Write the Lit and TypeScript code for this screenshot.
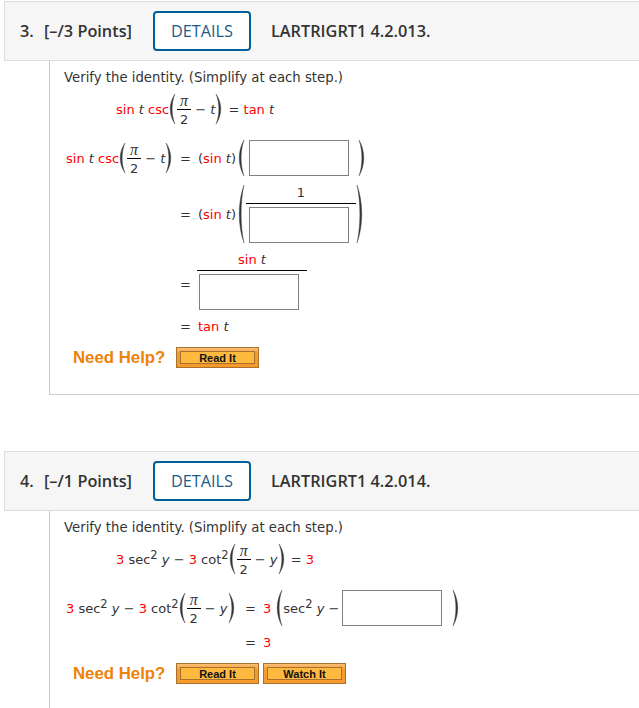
import { LitElement, html, css, svg } from "lit";
import { customElement } from "lit/decorators.js";

const paren = (h: number, right = false, w = 7) => {
  const a = right ? 1 : w - 1;
  const inner = right ? w - 2.2 : 2.2;
  const outer = right ? w + 0.4 : -0.4;
  return html`<svg class="paren" width=${w} height=${h} viewBox="0 0 ${w} ${h}">${svg`<path d="M${a} 0 C${outer} ${h * 0.3} ${outer} ${h * 0.7} ${a} ${h} C${inner} ${h * 0.7} ${inner} ${h * 0.3} ${a} 0Z" fill="#333" stroke="#444" stroke-width="0.4"/>`}</svg>`;
};

const piOver2 = html`<span class="frac"><span class="num"><i class="pi">π</i></span><span class="den">2</span></span>`;
const box = html`<span class="box"></span>`;
const r = (s: string) => html`<span class="red">${s}</span>`;
const t = (c: unknown) => html`<span class="run">${c}</span>`;
const trail = (c: unknown) => html`<span class="run trail">${c}</span>`;
const sinP = html`<span class="run pre">(${r("sin")} <i>t</i>)</span>`;

const needHelp = (watch: boolean) => html`
  <div class="help">
    <span class="need">Need Help?</span>
    <span class="btn"><span class="btn-in">Read It</span></span>
    ${watch ? html`<span class="btn watch"><span class="btn-in">Watch It</span></span>` : ""}
  </div>`;

const sinExpr = html`${t(html`${r("sin")} <i>t</i> ${r("csc")}`)}${paren(30)}${piOver2}${t(html` − <i>t</i>`)}${paren(30, true)}`;
const secExpr = html`${t(html`${r("3")} sec<sup>2</sup> <i>y</i> − ${r("3")} cot<sup>2</sup>`)}${paren(30)}${piOver2}${t(html` − <i>y</i>`)}${paren(30, true)}`;

@customElement("app-root")
export class AppRoot extends LitElement {
  static styles = css`
    :host { display: block; width: 639px; height: 708px; overflow: hidden; background: #fff; color: #333; font-family: "DejaVu Sans", Verdana, sans-serif; font-size: 13px; }
    .head { box-sizing: border-box; margin-left: 4px; width: 640px; height: 60px; margin-top: 1px; display: flex; align-items: center; background: #f6f6f6; border: 1px solid #ddd; font-family: "Open Sans", sans-serif; font-weight: 600; font-size: 16.3px; color: #333; }
    .head .n { margin-left: 15px; width: 24px; }
    .head .pts { width: 109px; }
    .details { box-sizing: border-box; width: 98px; height: 40px; display: flex; align-items: center; justify-content: center; border: 2px solid #00619a; border-radius: 4px; background: #fff; color: #1c5a8a; font-weight: 400; }
    .head .code { margin-left: 20px; }
    .body { margin-left: 49px; border-left: 1px solid #ccc; padding-left: 14px; }
    .q3 { box-sizing: border-box; height: 334px; border-bottom: 1px solid #ccc; }
    .q4 { height: 197px; }
    .gap { height: 55px; }
    .verify { padding-top: 9px; line-height: 16px; font-size: 13.25px; }
    .line { display: flex; align-items: center; }
    .run { white-space: pre; flex: none; }
    .trail { margin-left: 2px; }
    .pre { width: 40px; }
    .show { margin-left: 52px; margin-top: 6px; height: 34px; }
    .red { color: #f00; }
    i { font-style: italic; }
    .sp4 { width: 5px; flex: none; }
    .paren { flex: none; display: block; }
    sup { font-size: 11.5px; line-height: 0; vertical-align: 5px; }
    .frac { display: inline-flex; flex-direction: column; align-items: center; width: 14px; flex: none; margin-left: 1px; }
    .frac .num { align-self: stretch; text-align: center; border-bottom: 1px solid #000; height: 17px; line-height: 17px; font-family: "Liberation Serif", serif; font-size: 16px; }
    .frac .den { height: 16px; line-height: 20px; }
    .box { display: block; box-sizing: border-box; width: 100px; height: 36px; border: 1px solid #808080; background: #fff; flex: none; }
    .steps { display: grid; grid-template-columns: 114px 1fr; margin-top: 14px; margin-left: 2px; row-gap: 9px; }
    .steps .run, .eq { padding-top: 1px; }
    .steps .last .run, .steps .last .eq { padding-top: 0; }
    .lhs { display: flex; align-items: center; }
    .rhs { display: flex; align-items: center; }
    .steps.wide { grid-template-columns: 179px 1fr; }
    .eq { width: 18px; flex: none; }
    .boxfrac { display: flex; flex-direction: column; align-items: flex-start; flex: none; }
    .boxfrac .top { align-self: stretch; text-align: center; height: 18px; line-height: 15px; border-bottom: 1px solid #000; margin-bottom: 3px; }
    .boxfrac .top .run { padding-top: 0; }
    .f1 { width: 110px; margin-left: 1px; }
    .f1 .box { margin-left: 3px; }
    .f2 { width: 110px; margin-left: -1px; }
    .f2 .box { margin-left: 2px; }
    .eq.low { padding-top: 6px; }
    .help { display: flex; align-items: center; margin-left: 9px; margin-top: 13px; font-family: "Liberation Sans", Arial, sans-serif; }
    .need { color: #ee8208; font-weight: 700; font-size: 16.8px; width: 103px; }
    .btn { box-sizing: border-box; width: 83px; height: 21px; padding: 3px; border: 1px solid #a8712d; background: linear-gradient(#fbc077, #f49a2c 30%, #f79a2b); display: block; flex: none; }
    .btn.watch { margin-left: 4px; }
    .btn-in { box-sizing: border-box; display: flex; height: 100%; align-items: center; justify-content: center; border: 1px solid #a8712d; background: #feb93f; color: #111; font-size: 11px; font-weight: 700; }
    .s1 { margin-left: 4px; margin-right: 9px; }
    .s2 { margin-left: 3px; margin-right: 10px; }
  `;

  render() {
    return html`
      <div class="head"><span class="n">3.</span><span class="pts">[–/3 Points]</span><span class="details">DETAILS</span><span class="code">LARTRIGRT1 4.2.013.</span></div>
      <div class="body q3">
        <div class="verify">Verify the identity. (Simplify at each step.)</div>
        <div class="line show">${sinExpr}${trail(html` = ${r("tan")} <i>t</i>`)}</div>
        <div class="steps">
          <div class="lhs">${sinExpr}</div>
          <div class="rhs"><span class="eq">=</span>${sinP}${paren(36)}<span class="box s1"></span>${paren(36, true)}</div>
          <div></div>
          <div class="rhs"><span class="eq">=</span>${sinP}${paren(58)}<div class="boxfrac f1"><div class="top">1</div>${box}</div>${paren(58, true)}</div>
          <div></div>
          <div class="rhs"><span class="eq low">=</span><div class="boxfrac f2"><div class="top">${t(html`${r("sin")} <i>t</i>`)}</div>${box}</div></div>
          <div></div>
          <div class="rhs last"><span class="eq">=</span>${t(html`${r("tan")} <i>t</i>`)}</div>
        </div>
        ${needHelp(false)}
      </div>
      <div class="gap"></div>
      <div class="head"><span class="n">4.</span><span class="pts">[–/1 Points]</span><span class="details">DETAILS</span><span class="code">LARTRIGRT1 4.2.014.</span></div>
      <div class="body q4">
        <div class="verify">Verify the identity. (Simplify at each step.)</div>
        <div class="line show">${secExpr}${trail(html` = ${r("3")}`)}</div>
        <div class="steps wide">
          <div class="lhs">${secExpr}</div>
          <div class="rhs"><span class="eq">=</span>${t(r("3"))}<span class="sp4"></span>${paren(36)}${t(html`sec<sup>2</sup> <i>y</i> −`)}<span class="box s2"></span>${paren(36, true)}</div>
          <div></div>
          <div class="rhs last"><span class="eq">=</span>${t(r("3"))}</div>
        </div>
        ${needHelp(true)}
      </div>
    `;
  }
}
